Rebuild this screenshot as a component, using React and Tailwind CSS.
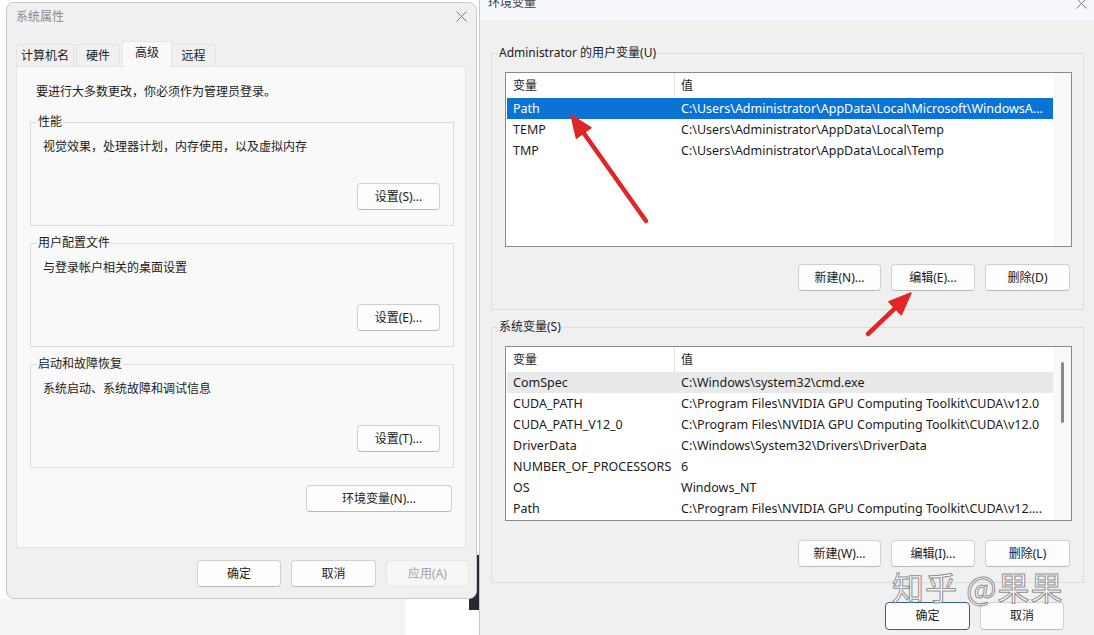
import React from 'react';

const userVars = [
  ['Path', 'C:\\Users\\Administrator\\AppData\\Local\\Microsoft\\WindowsA...'],
  ['TEMP', 'C:\\Users\\Administrator\\AppData\\Local\\Temp'],
  ['TMP', 'C:\\Users\\Administrator\\AppData\\Local\\Temp'],
];

const sysVars = [
  ['ComSpec', 'C:\\Windows\\system32\\cmd.exe'],
  ['CUDA_PATH', 'C:\\Program Files\\NVIDIA GPU Computing Toolkit\\CUDA\\v12.0'],
  ['CUDA_PATH_V12_0', 'C:\\Program Files\\NVIDIA GPU Computing Toolkit\\CUDA\\v12.0'],
  ['DriverData', 'C:\\Windows\\System32\\Drivers\\DriverData'],
  ['NUMBER_OF_PROCESSORS', '6'],
  ['OS', 'Windows_NT'],
  ['Path', 'C:\\Program Files\\NVIDIA GPU Computing Toolkit\\CUDA\\v12....'],
];

// red annotation arrows: tail -> tip
const arrows = [
  [646, 221, 571, 115],
  [868, 334, 911, 293],
  [243, 521, 335, 499],
];

const Btn = ({ children, className = '' }) => (
  <div className={`h-[27px] flex items-center justify-center rounded-[4px] border border-[#d0d0d0] border-b-[#b9b9b9] bg-[#fdfdfd] text-[12px] text-[#1b1b1b] ${className}`}>
    {children}
  </div>
);

const CloseX = () => (
  <svg width="11" height="11" viewBox="0 0 11 11">
    <path d="M0.5 0.5 L10.5 10.5 M10.5 0.5 L0.5 10.5" stroke="#7b7b7b" strokeWidth="1" fill="none" />
  </svg>
);

const Group = ({ title, className = '', children }) => (
  <fieldset className={`border border-[#dcdcdc] flex flex-col ${className}`}>
    <legend className="ml-[6px] px-[1px] text-[12px] leading-[16px] text-[#1b1b1b]">{title}</legend>
    {children}
  </fieldset>
);

const VarList = ({ rows, selected, hover, scroll }) => (
  <div className="ml-[13px] w-[567px] h-[175px] border border-[#8a8a8a] bg-white flex text-[12.5px] text-[#1b1b1b]">
    <div className="w-[547px] pl-[1px] flex flex-col">
      <div className="h-[25px] flex items-center text-[12px]">
        <div className="w-[168px] h-full pl-[6px] flex items-center border-r border-[#e5e5e5]">变量</div>
        <div className="pl-[6px]">值</div>
      </div>
      {rows.map(([k, v], i) => (
        <div
          key={k + i}
          className={`h-[21px] flex items-center whitespace-nowrap ${i === selected ? 'bg-[#0a74d6] text-white' : i === hover ? 'bg-[#e9e9e9]' : ''}`}
        >
          <div className="w-[168px] pl-[6px]">{k}</div>
          <div className="pl-[6px]">{v}</div>
        </div>
      ))}
    </div>
    <div className="flex-1 bg-[#f9f9f9] flex justify-center">
      {scroll && <div className="mt-[15px] w-[3px] h-[61px] rounded-full bg-[#8a8a8a]" />}
    </div>
  </div>
);

const Arrow = ({ x1, y1, x2, y2 }) => {
  const dx = x2 - x1;
  const dy = y2 - y1;
  const len = Math.hypot(dx, dy);
  const ux = dx / len;
  const uy = dy / len;
  const hl = 22;
  const hw = 9;
  const bx = x2 - ux * hl;
  const by = y2 - uy * hl;
  const pts = `${x2},${y2} ${bx - uy * hw},${by + ux * hw} ${bx + uy * hw},${by - ux * hw}`;
  return (
    <g>
      <line x1={x1} y1={y1} x2={bx + ux * 4} y2={by + uy * 4} stroke="#e02626" strokeWidth="4.5" strokeLinecap="round" />
      <polygon points={pts} fill="#e02626" stroke="#e02626" strokeWidth="1.5" strokeLinejoin="round" />
    </g>
  );
};

export default function App() {
  return (
    <div className="relative w-[1094px] h-[635px] overflow-hidden flex bg-white font-['Noto_Sans','Noto_Sans_CJK_SC',sans-serif] leading-[16px]">
      {/* 系统属性 */}
      <div className="relative w-[479px] shrink-0 flex flex-col bg-white">
        <div className="absolute left-[469px] top-[555px] w-[10px] h-[55px] bg-[#252a36]" />
        <div className="relative z-10 ml-[6px] mt-[2px] w-[471px] h-[597px] rounded-[8px] border border-[#c9c9c9] bg-[#f0f0f0] flex flex-col">
          <div className="h-[27px] flex items-center justify-between pl-[9px] pr-[9px]">
            <span className="text-[12px] text-[#8a8a8a]">系统属性</span>
            <CloseX />
          </div>
          <div className="mt-[11px] ml-[9px] h-[25px] flex items-end text-[12px] text-[#1b1b1b]">
            <div className="w-[58px] h-[22px] flex items-center justify-center border border-b-0 border-[#e3e3e3]">计算机名</div>
            <div className="ml-[2px] w-[44px] h-[22px] flex items-center justify-center border border-b-0 border-[#e3e3e3]">硬件</div>
            <div className="relative z-10 ml-[2px] -mb-[1px] w-[50px] h-[26px] flex items-start pt-[3px] justify-center border border-b-0 border-[#e3e3e3] bg-[#f9f9f9]">高级</div>
            <div className="w-[44px] h-[22px] flex items-center justify-center border border-b-0 border-l-0 border-[#e3e3e3]">远程</div>
          </div>
          <div className="ml-[9px] w-[450px] h-[482px] bg-[#f9f9f9] border border-[#e3e3e3] flex flex-col text-[12px] text-[#1b1b1b]">
            <div className="mt-[17px] ml-[19px]">要进行大多数更改，你必须作为管理员登录。</div>
            <Group title="性能" className="mt-[14px] ml-[13px] w-[424px] h-[112px]">
              <div className="mt-[9px] ml-[12px]">视觉效果，处理器计划，内存使用，以及虚拟内存</div>
              <Btn className="mt-[28px] mr-[13px] self-end w-[83px]">设置(S)...</Btn>
            </Group>
            <Group title="用户配置文件" className="mt-[9px] ml-[13px] w-[424px] h-[112px]">
              <div className="mt-[9px] ml-[12px]">与登录帐户相关的桌面设置</div>
              <Btn className="mt-[28px] mr-[13px] self-end w-[83px]">设置(E)...</Btn>
            </Group>
            <Group title="启动和故障恢复" className="mt-[9px] ml-[13px] w-[424px] h-[112px]">
              <div className="mt-[9px] ml-[12px]">系统启动、系统故障和调试信息</div>
              <Btn className="mt-[28px] mr-[13px] self-end w-[83px]">设置(T)...</Btn>
            </Group>
            <Btn className="mt-[17px] mr-[13px] self-end w-[146px]">环境变量(N)...</Btn>
          </div>
          <div className="mt-[12px] pr-[7px] flex justify-end gap-[10px]">
            <Btn className="w-[84px]">确定</Btn>
            <Btn className="w-[85px]">取消</Btn>
            <div className="w-[83px] h-[27px] flex items-center justify-center rounded-[4px] border border-[#e6e6e6] bg-[#f6f6f6] text-[12px] text-[#a3a3a3]">应用(A)</div>
          </div>
        </div>
        <div className="flex-1 flex">
          <div className="w-[405px] bg-[#f4f4f4]" />
        </div>
      </div>

      {/* 环境变量 */}
      <div className="flex-1 flex flex-col bg-[#f0f0f0] border-l border-[#c6c6c6] text-[12px] text-[#1b1b1b]">
        <div className="-mt-[14px] h-[34px] shrink-0 flex items-center justify-between pl-[8px] pr-[7px] bg-[#f6f8fb]">
          <span className="text-[#3a3a3a]">环境变量</span>
          <CloseX />
        </div>
        <Group title="Administrator 的用户变量(U)" className="mt-[25px] ml-[11px] w-[593px] h-[265px] shrink-0">
          <div className="mt-[11px]">
            <VarList rows={userVars} selected={0} />
          </div>
          <div className="mt-[17px] pr-[13px] flex justify-end gap-[10px]">
            <Btn className="w-[83px]">新建(N)...</Btn>
            <Btn className="w-[84px]">编辑(E)...</Btn>
            <Btn className="w-[85px]">删除(D)</Btn>
          </div>
        </Group>
        <Group title="系统变量(S)" className="mt-[9px] ml-[11px] w-[593px] h-[264px] shrink-0">
          <div className="mt-[11px]">
            <VarList rows={sysVars} hover={0} scroll />
          </div>
          <div className="mt-[19px] pr-[13px] flex justify-end gap-[10px]">
            <Btn className="w-[83px]">新建(W)...</Btn>
            <Btn className="w-[84px]">编辑(I)...</Btn>
            <Btn className="w-[85px]">删除(L)</Btn>
          </div>
        </Group>
        <div className="mt-[19px] pr-[30px] flex justify-end gap-[10px]">
          <div className="w-[85px] h-[28px] flex items-center justify-center rounded-[4px] border border-[#2f5f8c] bg-[#fdfdfd]">确定</div>
          <Btn className="w-[84px] h-[28px]">取消</Btn>
        </div>
      </div>

      {/* 水印 */}
      <div className="absolute left-[892px] top-[570px] text-[32px] leading-none tracking-[1px] text-white font-['Noto_Sans_CJK_SC',sans-serif] [-webkit-text-stroke:1px_#8f8f8f]">
        知乎 @果果
      </div>

      {/* 红色箭头 */}
      <svg className="absolute inset-0 pointer-events-none" width="1094" height="635">
        {arrows.map(([x1, y1, x2, y2], i) => (
          <Arrow key={i} x1={x1} y1={y1} x2={x2} y2={y2} />
        ))}
      </svg>
    </div>
  );
}
